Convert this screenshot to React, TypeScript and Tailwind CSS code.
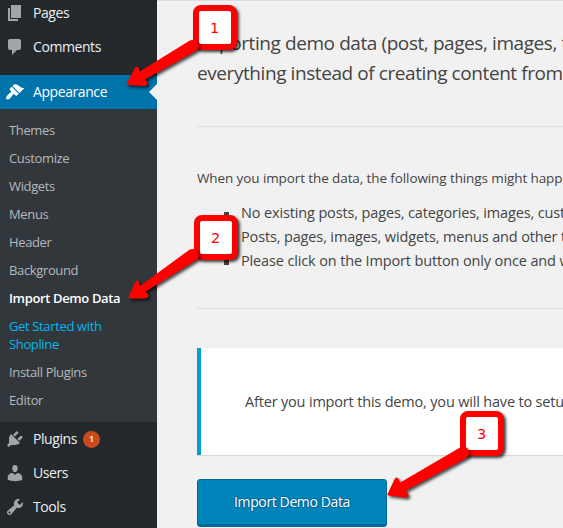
import React from "react";

const icons = {
  pages: "M6 15V2h10v13H6zm-1 1h8v2H3V5h2v11z",
  comments:
    "M5 2h9c1.1 0 2 .9 2 2v7c0 1.1-.9 2-2 2h-2l-5 5v-5H5c-1.1 0-2-.9-2-2V4c0-1.1.9-2 2-2z",
  appearance:
    "M14.48 11.06L7.41 3.99l1.5-1.5c.5-.56 2.3-.47 3.51.32 1.21.8 1.43 1.28 2.91 2.1 1.18.64 2.45 1.26 4.45.85zm-.71.71L6.7 4.7 4.93 6.47c-.39.39-.39 1.02 0 1.41l1.06 1.06c.39.39.39 1.03 0 1.42-.6.6-1.43 1.11-2.21 1.69-.35.26-.7.53-1.01.84C1.43 14.23.4 16.08 1.4 17.07c.99 1 2.84-.03 4.18-1.36.31-.31.58-.66.85-1.02.57-.78 1.08-1.61 1.69-2.21.39-.39 1.02-.39 1.41 0l1.06 1.06c.39.39 1.02.39 1.41 0z",
  plugins:
    "M13.11 4.36L9.87 7.6 8 5.73l3.24-3.24c.35-.34 1.05-.2 1.56.32.52.51.66 1.21.31 1.55zm-8 1.77l.91-1.12 9.01 9.01-1.19.84c-.71.71-2.63 1.16-3.82 1.16H6.14L4.9 17.26c-.59.59-1.54.59-2.12 0-.59-.58-.59-1.53 0-2.12l1.24-1.24v-3.88c0-1.13.4-3.19 1.09-3.89zm7.26 3.97l3.24-3.24c.34-.35 1.04-.21 1.55.31.52.51.66 1.21.31 1.55l-3.24 3.25z",
  users:
    "M10 9.25c-2.27 0-2.73-3.44-2.73-3.44C7 4.02 7.82 2 9.97 2c2.16 0 2.98 2.02 2.71 3.81 0 0-.41 3.44-2.68 3.44zm0 2.57L12.72 10c2.39 0 4.52 2.33 4.52 4.53v2.49s-3.65 1.13-7.24 1.13c-3.65 0-7.24-1.13-7.24-1.13v-2.49c0-2.25 1.94-4.48 4.47-4.48z",
  tools:
    "M16.68 9.77c-1.34 1.34-3.3 1.67-4.95.99l-5.41 6.52c-.99.99-2.59.99-3.58 0s-.99-2.59 0-3.57l6.52-5.42c-.68-1.65-.35-3.61.99-4.95 1.28-1.28 3.12-1.62 4.72-1.06l-2.89 2.89 2.82 2.82 2.86-2.87c.53 1.58.18 3.39-1.08 4.65zM3.81 16.21c.4.39 1.04.39 1.43 0 .4-.4.4-1.04 0-1.43-.39-.4-1.03-.4-1.43 0-.39.39-.39 1.03 0 1.43z",
};

type MenuItemProps = {
  icon: keyof typeof icons;
  label: string;
  active?: boolean;
  badge?: string;
};

function MenuItem({ icon, label, active, badge }: MenuItemProps) {
  return (
    <a
      className={`relative flex h-[34px] shrink-0 items-center pl-[5px] text-[14px] tracking-[-0.42px] ${
        active ? "bg-[#0073aa] text-white" : "text-[#eeeeee]"
      }`}
    >
      <svg
        viewBox="0 0 20 20"
        className={`mr-2 size-5 ${active ? "fill-white" : "fill-[#a0a5aa]"}`}
      >
        <path d={icons[icon]} />
      </svg>
      <span className="pb-px">{label}</span>
      {badge && (
        <span className="ml-[6px] flex size-[17px] items-center justify-center rounded-full bg-[#ca4a1f] text-[9px] font-semibold tracking-normal text-white">
          {badge}
        </span>
      )}
      {active && (
        <span className="absolute right-0 top-[9px] border-y-8 border-r-8 border-y-transparent border-r-[#f1f1f1]" />
      )}
    </a>
  );
}

function SubItem({ className = "text-[#b4b9be]", children }: { className?: string; children: React.ReactNode }) {
  return (
    <a className={`block px-[9px] py-[5px] text-[13px] leading-[18px] tracking-[-0.36px] ${className}`}>{children}</a>
  );
}

function Sidebar() {
  return (
    <nav className="w-[157px] shrink-0 overflow-hidden bg-[#23282d]">
      <div className="-mt-1 flex flex-col">
        <MenuItem icon="pages" label="Pages" />
        <MenuItem icon="comments" label="Comments" />
        <div className="h-[11px]" />
        <MenuItem icon="appearance" label="Appearance" active />
        <div className="bg-[#32373c] pb-2 pt-[7px]">
          <SubItem>Themes</SubItem>
          <SubItem>Customize</SubItem>
          <SubItem>Widgets</SubItem>
          <SubItem>Menus</SubItem>
          <SubItem>Header</SubItem>
          <SubItem>Background</SubItem>
          <SubItem className="font-semibold text-white">Import Demo Data</SubItem>
          <SubItem className="text-[#00b9eb]">
            Get Started with
            <br />
            Shopline
          </SubItem>
          <SubItem>Install Plugins</SubItem>
          <SubItem>Editor</SubItem>
        </div>
        <MenuItem icon="plugins" label="Plugins" badge="1" />
        <MenuItem icon="users" label="Users" />
        <MenuItem icon="tools" label="Tools" />
      </div>
    </nav>
  );
}

function Bullet({ children }: { children: React.ReactNode }) {
  return (
    <li className="flex h-6 items-center">
      <span className="mr-[12px] mt-0.5 size-[5px] shrink-0 bg-[#444444]" />
      <span>{children}</span>
    </li>
  );
}

function Content() {
  return (
    <main className="min-w-0 flex-1 overflow-hidden whitespace-nowrap border-t border-[#dddddd] pl-10 text-[#444444]">
      <div className="mt-[27px] text-[19px] leading-[30px] tracking-[-0.42px]">
        <p>Importing demo data (post, pages, images, theme settings)</p>
        <p>everything instead of creating content from scratch.</p>
      </div>
      <hr className="mt-[38px] border-[#dddddd]" />
      <p className="mt-[41px] text-[13.5px] leading-5 tracking-[-0.1px]">
        When you import the data, the following things might happen:
      </p>
      <ul className="ml-[27px] mt-[13px] text-[14.5px] tracking-[-0.14px]">
        <Bullet>No existing posts, pages, categories, images, custom</Bullet>
        <Bullet>Posts, pages, images, widgets, menus and other theme</Bullet>
        <Bullet>Please click on the Import button only once and wait</Bullet>
      </ul>
      <hr className="mt-[35px] border-[#dddddd]" />
      <div className="mt-[39px] flex h-[107px] items-center border-l-4 border-[#00a0d2] bg-white pl-11 text-[14.5px] tracking-[-0.18px] shadow-[0_1px_1px_rgba(0,0,0,0.1)]">
        After you import this demo, you will have to setup
      </div>
      <button className="mt-6 block h-12 w-[190px] rounded-[3px] border border-[#006799] bg-[#0085ba] pb-[3px] text-[14px] tracking-[-0.38px] text-white shadow-[inset_0_-2px_0_#006799] [text-shadow:0_-1px_1px_#006799,1px_0_1px_#006799,0_1px_1px_#006799,-1px_0_1px_#006799]">
        Import Demo Data
      </button>
    </main>
  );
}

function Callout({ label, className }: { label: string; className: string }) {
  return (
    <div
      className={`absolute flex h-[45px] w-11 items-center justify-center rounded-lg border-6 border-[#fe0000] bg-white pr-px pt-[3px] font-['DejaVu_Sans',sans-serif] text-[14.5px] text-[#fe0000] shadow-[2px_2px_3px_rgba(0,0,0,0.75)] ${className}`}
    >
      {label}
    </div>
  );
}

export default function App() {
  return (
    <div className="relative flex h-[528px] w-[563px] overflow-hidden bg-[#f1f1f1] font-['Open_Sans','Noto_Sans',sans-serif]">
      <Sidebar />
      <Content />
      <Callout label="1" className="left-[193px] top-[5px]" />
      <Callout label="2" className="left-[194px] top-[215px]" />
      <Callout label="3" className="left-[460px] top-[411px]" />
      <svg
        viewBox="0 0 563 528"
        className="absolute inset-0 h-full w-full fill-[#fe0000] stroke-[#fe0000] stroke-2 [stroke-linejoin:round] [filter:drop-shadow(2px_2px_1.5px_rgba(0,0,0,0.7))]"
      >
        <path d="M127.500 84L136 68Q137.500 66.500 138 69L139 73L190 41.500Q195 40 197 44Q199 48 195 50.500L143 79.500L146 82Q147 85 144 85Z" />
        <path d="M129.500 297.500L136 282.500Q137.500 280.500 138 283L139.500 287.500L190 250.500Q195 249 197 253Q199 257 195.500 259.500L144 291.500L147 294.500Q148.500 297 145 297.500Z" />
        <path d="M388.500 494.500L395.500 479.500Q397 477.500 398 480L399.500 484L461 448Q466 447 467.500 450.500Q469 455 466 457L403.500 490.500L407 494Q408.500 496.500 405 496.500Z" />
      </svg>
    </div>
  );
}
